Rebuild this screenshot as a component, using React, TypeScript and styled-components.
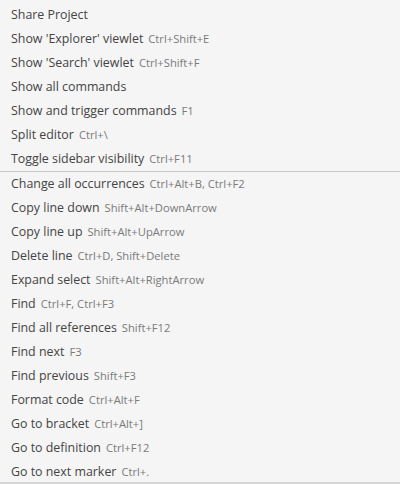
import styled, { createGlobalStyle } from 'styled-components';

const Global = createGlobalStyle`
    html, body {
        margin: 0;
        padding: 0;
        background: #f5f5f5;
    }
`;

const Menu = styled.div`
    width: 400px;
    height: 484px;
    box-sizing: border-box;
    padding-top: 3px;
    background: #f5f5f5;
    border-bottom: 2px solid #d6d6d6;
    overflow: hidden;
    font-family: "Open Sans", "Noto Sans", sans-serif;
`;

const Row = styled.div`
    display: flex;
    align-items: baseline;
    column-gap: 5px;
    height: 24px;
    line-height: 24px;
    padding-left: 11px;
    white-space: nowrap;
`;

const Label = styled.span`
    font-size: 12.4px;
    color: #444;
`;

const Keys = styled.span`
    font-size: 11.2px;
    color: #7a7a7a;
`;

const Separator = styled.div`
    height: 1px;
    background: #c8c8c8;
`;

type Item = [string, string];

const top: Item[] = [
    ['Share Project', ''],
    ["Show 'Explorer' viewlet", 'Ctrl+Shift+E'],
    ["Show 'Search' viewlet", 'Ctrl+Shift+F'],
    ['Show all commands', ''],
    ['Show and trigger commands', 'F1'],
    ['Split editor', 'Ctrl+\\'],
    ['Toggle sidebar visibility', 'Ctrl+F11'],
];

const bottom: Item[] = [
    ['Change all occurrences', 'Ctrl+Alt+B, Ctrl+F2'],
    ['Copy line down', 'Shift+Alt+DownArrow'],
    ['Copy line up', 'Shift+Alt+UpArrow'],
    ['Delete line', 'Ctrl+D, Shift+Delete'],
    ['Expand select', 'Shift+Alt+RightArrow'],
    ['Find', 'Ctrl+F, Ctrl+F3'],
    ['Find all references', 'Shift+F12'],
    ['Find next', 'F3'],
    ['Find previous', 'Shift+F3'],
    ['Format code', 'Ctrl+Alt+F'],
    ['Go to bracket', 'Ctrl+Alt+]'],
    ['Go to definition', 'Ctrl+F12'],
    ['Go to next marker', 'Ctrl+.'],
];

const renderRow = ([label, keys]: Item) => <Row key={label}>
    <Label>{label}</Label>
    {keys && <Keys>{keys}</Keys>}
</Row>;

const App = () => <>
    <Global />
    <Menu>
        {top.map(renderRow)}
        <Separator />
        {bottom.map(renderRow)}
    </Menu>
</>;

export default App;
